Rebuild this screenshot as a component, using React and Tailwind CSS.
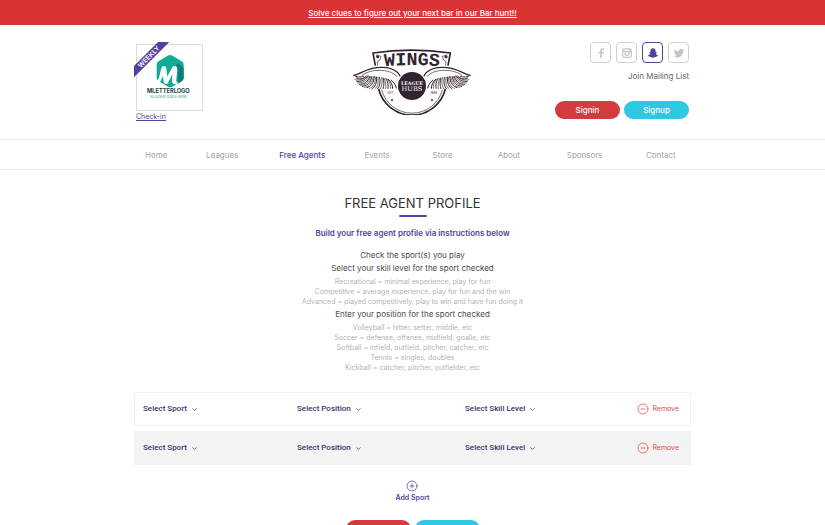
import { useState } from 'react'
import { ChevronDown, CircleMinus, CirclePlus } from 'lucide-react'

const NAV = ['Home', 'Leagues', 'Free Agents', 'Events', 'Store', 'About', 'Sponsors', 'Contact']

const SKILLS = [
  'Recreational = minimal experience, play for fun',
  'Competitive = average experience, play for fun and the win',
  'Advanced = played competitively, play to win and have fun doing it',
]

const POSITIONS = [
  'Volleyball = hitter, setter, middle, etc',
  'Soccer = defense, offense, midfield, goalie, etc',
  'Softball = infield, outfield, pitcher, catcher, etc',
  'Tennis = singles, doubles',
  'Kickball = catcher, pitcher, outfielder, etc',
]

const FIELDS = ['Select Sport', 'Select Position', 'Select Skill Level']

const SOCIALS = [
  {
    name: 'Facebook',
    icon: <path d="M13.800 22v-9h3.200l.5-3.500h-3.700V7.500c0-1 .4-1.700 1.800-1.700h2V2.500c-.5-.1-1.500-.2-2.500-.2-2.800 0-4.600 1.700-4.600 4.700v2.500H7.300V13h3.200v9z" />,
  },
  {
    name: 'Instagram',
    icon: (
      <g fill="none" stroke="currentColor" strokeWidth="2.500">
        <rect x="3.500" y="3.500" width="17" height="17" rx="3" />
        <circle cx="12" cy="12.500" r="4" />
        <path d="M3.500 8.500h5M15.500 8.500h5M16 5.500h2" />
      </g>
    ),
  },
  {
    name: 'Snapchat',
    active: true,
    icon: <path d="M12 2.500c3.500 0 5.300 2.500 5.300 5.500v2.500l2-.4.4 1.300-2 1.300c.7 2.300 2.300 3.700 4.300 4.300-.3 1.300-1.800 1.600-3.200 1.800l-.6 1.400c-2.300-.4-3.200.2-4.200.9-1.200.8-2.800.8-4 0-1-.7-1.900-1.300-4.200-.9l-.6-1.400c-1.400-.2-2.900-.5-3.200-1.800 2-.6 3.600-2 4.300-4.300l-2-1.300.4-1.300 2 .4V8c0-3 1.800-5.500 5.300-5.500z" />,
  },
  {
    name: 'Twitter',
    icon: <path d="M22.500 5.800c-.8.300-1.600.6-2.500.7.900-.5 1.600-1.400 1.900-2.400-.8.500-1.800.9-2.700 1.100a4.300 4.300 0 0 0-7.400 3.900C8.200 8.900 5 7.200 2.900 4.600c-1.200 2-.6 4.500 1.300 5.800-.7 0-1.400-.2-2-.5 0 2.100 1.500 3.800 3.500 4.300-.6.200-1.300.2-2 .1.600 1.700 2.200 2.900 4 3a8.700 8.700 0 0 1-6.400 1.800c7.500 4.800 18.800 1 18.800-10.700.9-.7 1.700-1.600 2.400-2.600z" />,
  },
]

function Pill({ children, color }) {
  return (
    <button className={`h-[18px] w-[65px] rounded-full text-[8px] leading-none font-medium text-white ${color}`}>
      {children}
    </button>
  )
}

function Sponsor() {
  return (
    <div className="relative ml-0.5 w-[67px] pt-0.5">
      <div className="h-[67px] border border-[#d9d9de]">
        <svg viewBox="37 31 195 192" className="size-full" role="img" aria-label="Mletterlogo">
          <path d="M130 61q6-3 12 0l29 17q6 3 6 10v40q0 7-6 10l-29 17q-6 3-12 0l-28-17q-6-3-6-10V88q0-7 6-10z" fill="#10ab95" />
          <path d="M151 100q9 0 9 12l-2 35 13-9q6-3 6-10V98l-19-14z" fill="#0b7f74" />
          <path d="M92 142c12-4 13-28 18-43 3-9 14-8 15 1l3 24 14-26c4-8 17-7 16 5l-3 31c-1 8 4 9 7 8-5 8-20 8-20-5l1-20-12 24c-4 8-12 7-14-1l-3-18c-5 17-10 27-22 19z" fill="#fff" />
          <text x="131" y="175" textAnchor="middle" fontSize="17" fontWeight="700" fill="#17443f">MLETTERLOGO</text>
          <text x="132" y="189" textAnchor="middle" fontSize="11" fill="#2c9b8c">SLOGAN GOES HERE</text>
        </svg>
      </div>
      <svg viewBox="0 0 108 108" className="absolute top-0 -left-0.5 size-9" aria-hidden="true">
        <path d="M0 72 72 0h34L0 106z" fill="#54419c" />
        <text x="45" y="51" textAnchor="middle" fontSize="20" fontWeight="600" fill="#fff" transform="rotate(-45 45 45)">WEEKLY</text>
      </svg>
      <a href="#check-in" className="block text-[7px] leading-3 text-[#54419c] underline">Check-in</a>
    </div>
  )
}

function Wing() {
  return (
    <g fill="none" stroke="#33222f" strokeLinecap="round">
      <path d="M27 109c20-5 38-20 68-23 27-3 48 2 61 13 5 4 7 8 9 12" strokeWidth="4" />
      <path d="M52 108c15-10 31-14 50-14 24 0 42 5 54 19" strokeWidth="2" />
      <path d="M27 109c8 6 19 7 29 3M34 117c8 5 20 4 29-4M35 127c13 2 25-3 34-17M43 136c13 0 25-7 32-24M52 142c13-1 24-9 29-29M66 146c11-3 20-13 22-33M81 149c9-5 15-16 14-35M98 149c6-7 9-18 6-34M114 149c4-9 4-20 0-32M129 148c2-9 0-21-7-30M143 148c0-9-4-19-13-27M154 147c-2-9-7-17-16-23" strokeWidth="3" />
      <path d="M30 122c13 3 24 0 34-11M38 132c13 1 25-6 33-20M47 139c13 0 24-8 31-26M59 145c12-2 21-11 26-31M74 148c10-4 17-14 18-34M90 149c8-6 11-17 9-34M106 149c5-8 7-18 4-33M122 149c2-9 1-20-5-31M137 148c1-9-2-20-11-28" strokeWidth="2" />
    </g>
  )
}

function Crest() {
  return (
    <svg viewBox="24 27 354 201" className="h-[67px] w-[118px]" role="img" aria-label="Wings League Hubs">
      <g fill="none" stroke="#33222f">
        <path d="M101 150a103 103 0 0 0 200 0" strokeWidth="5" />
        <path d="M110 152a94 94 0 0 0 182 0" strokeWidth="2" />
        <path d="M91 80l-7-38q116-17 232 0l-7 38" strokeWidth="5" />
        <path d="M98 80l-1-12q10-2 11-16l-15-4M302 80l1-12q-10-2-11-16l15-4" strokeWidth="2" />
      </g>
      <circle cx="98" cy="53" r="4.500" fill="#33222f" />
      <circle cx="303" cy="53" r="4.500" fill="#33222f" />
      <path id="arch" d="M106 83q95-10 190 0" fill="none" />
      <text fontSize="55" fontWeight="700" fill="#33222f" className="font-['Liberation_Mono',monospace]">
        <textPath href="#arch" startOffset="50%" textAnchor="middle">WINGS</textPath>
      </text>
      <Wing />
      <g transform="matrix(-1 0 0 1 402 0)"><Wing /></g>
      <circle cx="201" cy="141" r="45" fill="#fff" />
      <circle cx="201" cy="141" r="42" fill="#33222f" />
      <g textAnchor="middle" fill="#fff" className="font-['DejaVu_Serif',serif]">
        <text x="201" y="137" fontSize="14" fontWeight="700">LEAGUE</text>
        <text x="201" y="156" fontSize="20">HUBS</text>
      </g>
      <g textAnchor="middle" fontSize="9" fill="#33222f">
        <text x="136" y="164">EST</text>
        <text x="266" y="164">1989</text>
      </g>
      <circle cx="141" cy="183" r="3" fill="#33222f" />
      <circle cx="261" cy="183" r="3" fill="#33222f" />
    </svg>
  )
}

function SelectField({ label }) {
  return (
    <label className="flex items-center gap-1 text-[#3d3168]">
      <select
        aria-label={label}
        className="field-sizing-content appearance-none bg-transparent font-['Roboto',sans-serif] text-[8px] leading-3 font-medium"
      >
        <option>{label}</option>
      </select>
      <ChevronDown className="size-[7px]" strokeWidth={2.5} />
    </label>
  )
}

export default function App() {
  const [rows, setRows] = useState([1, 2])

  return (
    <div className="bg-white pb-6 font-['Inter','Roboto',sans-serif] text-[#4a4a4a]">
      <div className="flex h-[25px] items-center justify-center bg-[#d93434]">
        <a href="#hunt" className="text-[8px] leading-3 font-medium text-white underline">
          Solve clues to figure out your next bar in our Bar hunt!!
        </a>
      </div>

      <header className="mx-auto grid h-[114px] max-w-[557px] grid-cols-[1fr_auto_1fr] items-start pt-[17px] pr-0.5">
        <Sponsor />
        <div className="pt-1.5"><Crest /></div>
        <div className="flex flex-col items-end">
          <div className="flex gap-[5px]">
            {SOCIALS.map(s => (
              <a
                key={s.name}
                href={`#${s.name}`}
                aria-label={s.name}
                className={`flex size-[21px] items-center justify-center rounded-sm border ${s.active ? 'border-[#54419c] text-[#54419c]' : 'border-[#cfcfcf] text-[#c4c4c4]'}`}
              >
                <svg viewBox="0 0 24 24" fill="currentColor" className="size-3">{s.icon}</svg>
              </a>
            ))}
          </div>
          <a href="#mailing" className="mt-[7px] text-[8px] leading-3 text-[#666]">Join Mailing List</a>
          <div className="mt-[19px] flex gap-1">
            <Pill color="bg-[#d33c3f]">Signin</Pill>
            <Pill color="bg-[#2dc8e2]">Signup</Pill>
          </div>
        </div>
      </header>

      <nav className="border-y border-[#ececec]">
        <div className="mx-auto grid h-[29px] max-w-[557px] grid-cols-[61fr_73fr_85fr_68fr_65fr_69fr_79fr_34fr] items-center px-[11px] text-[8px] text-[#a3a3a3]">
          {NAV.map(item => (
            <a
              key={item}
              href={`#${item}`}
              className={`whitespace-nowrap ${item === 'Free Agents' ? 'font-medium text-[#54419c]' : ''}`}
            >
              {item}
            </a>
          ))}
        </div>
      </nav>

      <main className="mx-auto flex max-w-[557px] flex-col items-center text-center">
        <h1 className="mt-6 text-[13px] leading-[18px] text-[#333]">FREE AGENT PROFILE</h1>
        <div className="mt-[3px] h-0.5 w-7 rounded-full bg-[#54419c]" />
        <p className="mt-2.5 text-[8px] leading-3 font-semibold text-[#54419c]">
          Build your free agent profile via instructions below
        </p>
        <div className="mt-2.5 text-[8px] leading-[13px]">
          <p>Check the sport(s) you play</p>
          <p>Select your skill level for the sport checked</p>
          <ul className="pt-0.5 pb-px text-[7px] leading-[10px] text-[#b3b3b3]">
            {SKILLS.map(s => <li key={s}>{s}</li>)}
          </ul>
          <p>Enter your position for the sport checked</p>
          <ul className="pt-0.5 pb-px text-[7px] leading-[10px] text-[#b3b3b3]">
            {POSITIONS.map(p => <li key={p}>{p}</li>)}
          </ul>
        </div>

        <div className="mt-[18px] flex w-full flex-col gap-[5px]">
          {rows.map((id, i) => (
            <div
              key={id}
              className={`grid h-[34px] grid-cols-[154px_168px_1fr_auto] items-center border pr-[11px] pl-2 ${i % 2 ? 'border-[#f3f3f3] bg-[#f3f3f3]' : 'border-[#f2f2f2]'}`}
            >
              {FIELDS.map(f => <SelectField key={f} label={f} />)}
              <button
                onClick={() => setRows(rows.filter(r => r !== id))}
                className="flex items-center gap-[3px] text-[7px] leading-3 text-[#e0474a]"
              >
                <CircleMinus className="size-3" strokeWidth={1.5} />
                Remove
              </button>
            </div>
          ))}
        </div>

        <button
          onClick={() => setRows([...rows, Date.now()])}
          className="mt-[15px] flex flex-col items-center text-[7px] leading-3 font-semibold text-[#54419c]"
        >
          <CirclePlus className="size-3" strokeWidth={1.5} />
          Add Sport
        </button>

        <div className="mt-4 flex gap-1">
          <Pill color="bg-[#d33c3f]">Update</Pill>
          <Pill color="bg-[#2dc8e2]">Cancel</Pill>
        </div>
      </main>
    </div>
  )
}
